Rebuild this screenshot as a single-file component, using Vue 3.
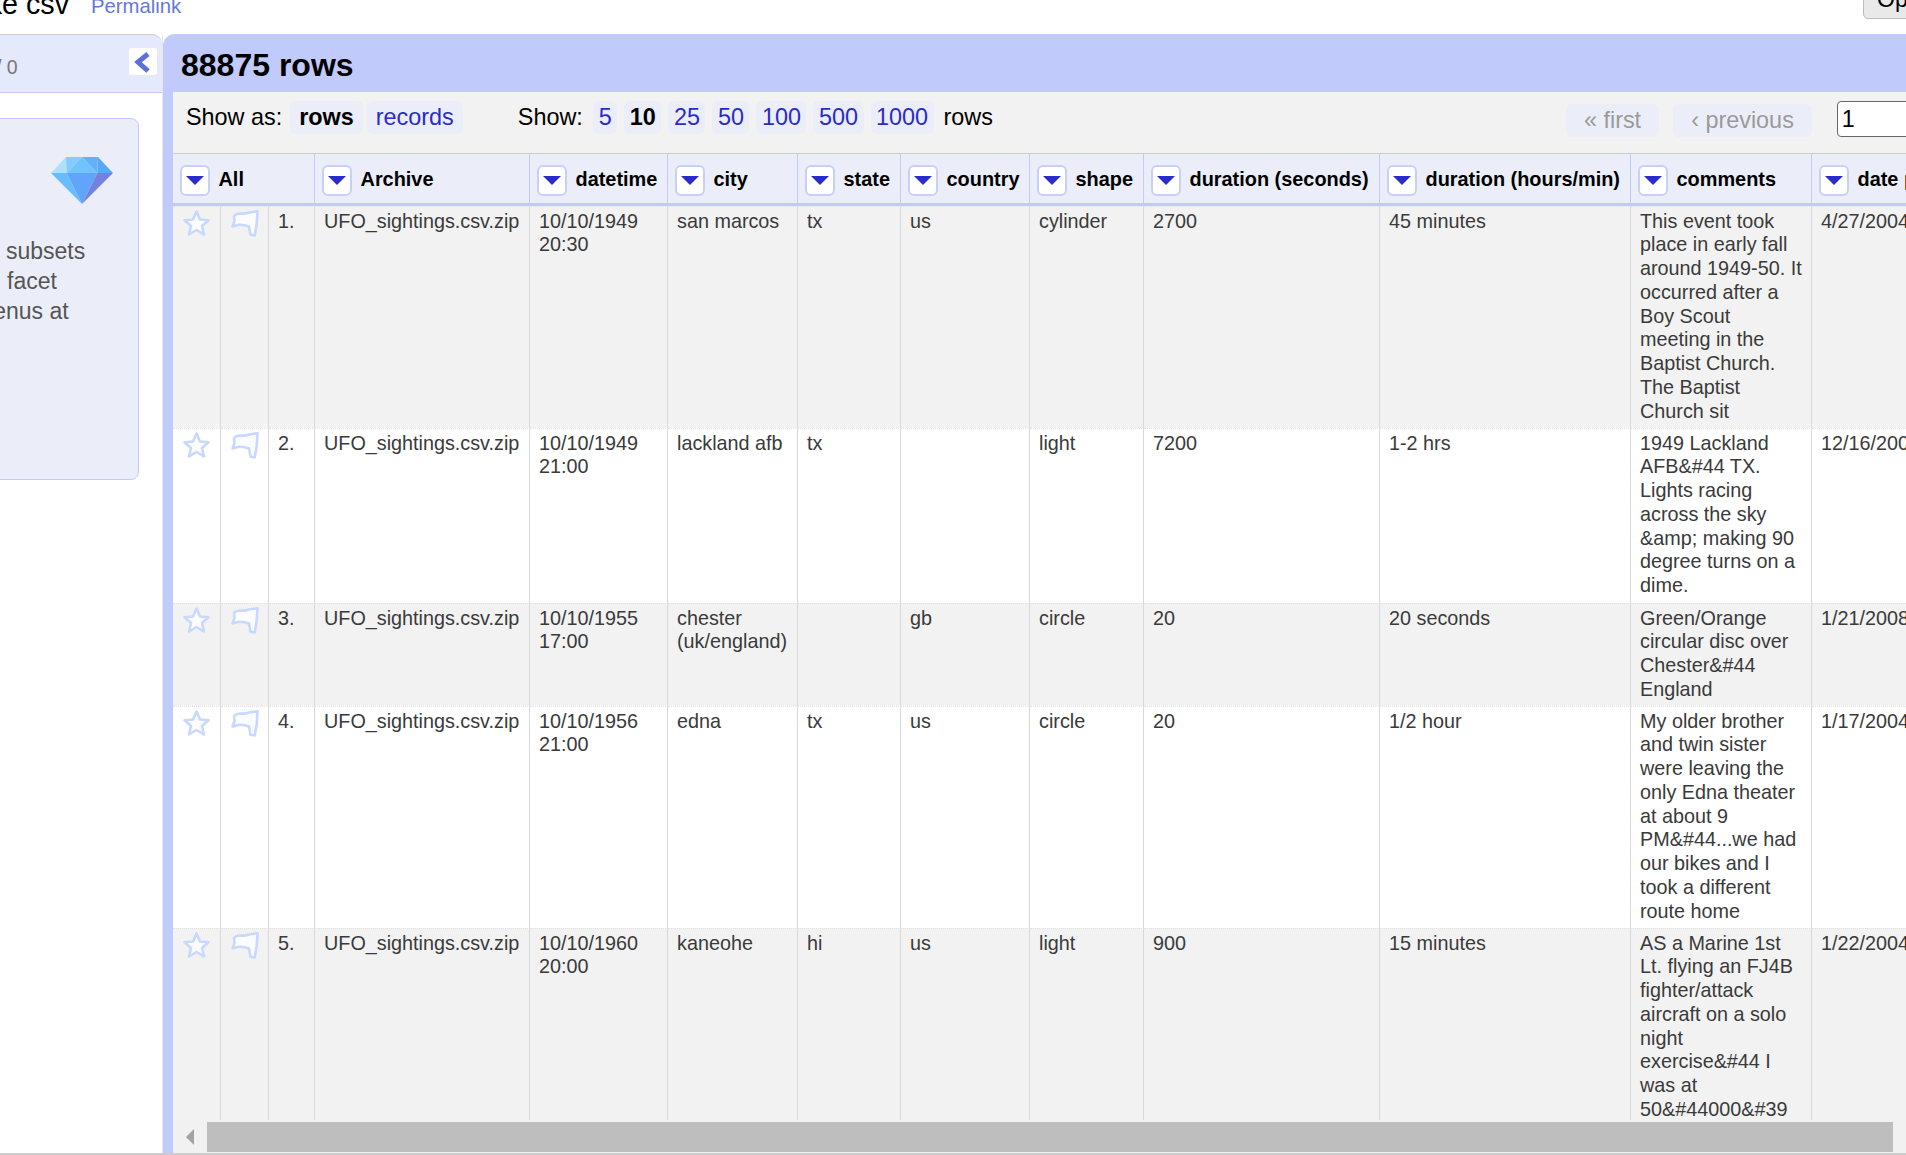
<script setup>
const pageSizes = ['5', '10', '25', '50', '100', '500', '1000']
const columns = ['Archive', 'datetime', 'city', 'state', 'country', 'shape', 'duration (seconds)', 'duration (hours/min)', 'comments', 'date posted']
const colWidths = [48, 48, 46, 215, 138, 130, 103, 129, 114, 236, 251, 181, 160]

const rows = [
  { height: 222, cells: ['UFO_sightings.csv.zip', '10/10/1949 20:30', 'san marcos', 'tx', 'us', 'cylinder', '2700', '45 minutes', 'This event took place in early fall around 1949-50. It occurred after a Boy Scout meeting in the Baptist Church. The Baptist Church sit', '4/27/2004'] },
  { height: 175, cells: ['UFO_sightings.csv.zip', '10/10/1949 21:00', 'lackland afb', 'tx', '', 'light', '7200', '1-2 hrs', '1949 Lackland AFB&#44 TX. Lights racing across the sky &amp; making 90 degree turns on a dime.', '12/16/2005'] },
  { height: 103, cells: ['UFO_sightings.csv.zip', '10/10/1955 17:00', 'chester (uk/england)', '', 'gb', 'circle', '20', '20 seconds', 'Green/Orange circular disc over Chester&#44 England', '1/21/2008'] },
  { height: 222, cells: ['UFO_sightings.csv.zip', '10/10/1956 21:00', 'edna', 'tx', 'us', 'circle', '20', '1/2 hour', 'My older brother and twin sister were leaving the only Edna theater at about 9 PM&#44...we had our bikes and I took a different route home', '1/17/2004'] },
  { height: 240, cells: ['UFO_sightings.csv.zip', '10/10/1960 20:00', 'kaneohe', 'hi', 'us', 'light', '900', '15 minutes', 'AS a Marine 1st Lt. flying an FJ4B fighter/attack aircraft on a solo night exercise&#44 I was at 50&#44000&#39 altitude over', '1/22/2004'] },
]
</script>

<template>
  <div class="page">
    <div class="top_bar">
      <span class="title">ke csv</span>
      <a class="permalink">Permalink</a>
      <button class="open_btn">Open</button>
    </div>

    <div class="workspace">
      <div class="left_panel">
        <div class="left_head">
          <span class="count">/ 0</span>
          <div class="collapse_btn">
            <svg width="28" height="27" viewBox="0 0 28 27">
              <polyline points="19,6 9,14 19,23" fill="none" stroke="#5c70d9" stroke-width="5" />
            </svg>
          </div>
        </div>
        <div class="hint_card">
          <svg class="diamond" width="62" height="47" viewBox="0 0 62 47">
            <polygon points="0,16 15,0 15.7,16" fill="#aee0f9" />
            <polygon points="15,0 31,0 15.7,16" fill="#82cdfb" />
            <polygon points="15.7,16 31,0 46.3,16" fill="#70c3fc" />
            <polygon points="31,0 47,0 46.3,16" fill="#62b1f9" />
            <polygon points="47,0 62,16 46.3,16" fill="#5aa7f7" />
            <polygon points="0,16 15.7,16 31,47" fill="#67bcfd" />
            <polygon points="15.7,16 46.3,16 31,47" fill="#60a5fa" />
            <polygon points="46.3,16 62,16 31,47" fill="#7581e0" />
          </svg>
          <div class="hint_text">
            <p class="line_subsets">subsets</p>
            <p class="line_facet">facet</p>
            <p class="line_menus">menus at</p>
          </div>
        </div>
      </div>

      <div class="main_panel">
        <div class="main_head">88875 rows</div>
        <div class="main_body">
          <div class="toolbar">
            <span class="label">Show as:</span>
            <span class="pill current">rows</span>
            <a class="pill records">records</a>
            <span class="label show_label">Show:</span>
            <template v-for="size in pageSizes" :key="size">
              <span v-if="size === '10'" class="pill small current">{{ size }}</span>
              <a v-else class="pill small">{{ size }}</a>
            </template>
            <span class="label rows_label">rows</span>
            <span class="pager first">« first</span>
            <span class="pager previous">‹ previous</span>
            <input class="page_input" value="1" />
          </div>

          <div class="table_wrap">
            <table class="grid">
              <colgroup>
                <col v-for="(w, i) in colWidths" :key="i" :width="w" />
              </colgroup>
              <thead>
                <tr>
                  <th colspan="3">
                    <div class="th_inner"><span class="drop_btn"><i></i></span>All</div>
                  </th>
                  <th v-for="col in columns" :key="col">
                    <div class="th_inner"><span class="drop_btn"><i></i></span>{{ col }}</div>
                  </th>
                </tr>
              </thead>
              <tbody>
                <tr v-for="(row, r) in rows" :key="r" :class="{ odd: r % 2 === 0 }" :style="{ height: row.height + 'px' }">
                  <td class="icon_cell">
                    <svg class="mark" width="27" height="27" viewBox="0 0 27 27">
                      <polygon points="13.5,1.5 17,9.5 25.5,10.3 19,16 21,24.5 13.5,20 6,24.5 8,16 1.5,10.3 10,9.5" fill="#fbfcff" stroke="#c8d8fe" stroke-width="2.6" stroke-linejoin="round" />
                    </svg>
                  </td>
                  <td class="icon_cell">
                    <svg class="mark" width="28" height="27" viewBox="0 0 28 27">
                      <path d="M3 6 Q5 3.5 9 3.5 Q14 4 18 2.5 L26.5 1.2 L25.7 14 L23.7 25.5 L19.5 24.7 L18 16.5 Q13 14.5 8 14.8 L1.5 16.5 L3.5 11 Z" fill="#fbfcff" stroke="#c8d8fe" stroke-width="2.6" stroke-linejoin="round" />
                    </svg>
                  </td>
                  <td>{{ r + 1 }}.</td>
                  <td v-for="(cell, c) in row.cells" :key="c">{{ cell }}</td>
                </tr>
              </tbody>
            </table>
          </div>

          <div class="scrollbar">
            <span class="scroll_arrow"></span>
            <div class="scroll_thumb"></div>
          </div>
        </div>
      </div>
    </div>
  </div>
</template>

<style>
html, body {
  margin: 0;
  overflow: hidden;
  background: #fff;
}
</style>

<style scoped>
.page {
  display: flex;
  flex-direction: column;
  width: 1906px;
  height: 1155px;
  overflow: hidden;
  font-family: "Liberation Sans", Arial, sans-serif;
  color: #000;
}
.top_bar {
  display: flex;
  align-items: flex-start;
  flex: none;
  height: 34px;
  overflow: hidden;
}
.title {
  flex: none;
  margin: -12.5px 0 0 -12.3px;
  font-size: 28.7px;
}
.permalink {
  flex: none;
  margin: -5px 0 0 22px;
  font-size: 20.3px;
  color: #6478db;
}
.open_btn {
  flex: none;
  margin: -20px -60px 0 auto;
  width: 103px;
  height: 39px;
  padding: 0 0 0 13px;
  text-align: left;
  font-family: inherit;
  font-size: 23px;
  color: #000;
  background: #e9e9e9;
  border: 1px solid #bcbcbc;
  border-radius: 5px;
}
.workspace {
  display: flex;
  flex: 1;
  min-height: 0;
  border-bottom: 2px solid #ccc;
}
.left_panel {
  flex: none;
  width: 163px;
  overflow: hidden;
  border-right: 1px solid #e6e6e6;
  box-sizing: border-box;
}
.left_head {
  display: flex;
  align-items: flex-start;
  justify-content: space-between;
  height: 59px;
  padding: 13px 5px 0 0;
  box-sizing: border-box;
  background: #e5e9fc;
  border-top: 1px solid #ccc;
  border-bottom: 1px solid #c0cbfb;
  border-top-right-radius: 10px;
}
.count {
  margin: 8px 0 0 -4px;
  font-size: 19.5px;
  color: #777;
}
.collapse_btn {
  width: 28px;
  height: 27px;
  background: #fff;
  border-radius: 3px;
}
.collapse_btn svg {
  display: block;
}
.hint_card {
  display: flex;
  flex-direction: column;
  align-items: flex-start;
  width: 160px;
  height: 362px;
  margin: 25px 0 0 -21px;
  box-sizing: border-box;
  background: #ebeef8;
  border: 1px solid #c0cbfb;
  border-radius: 8px;
}
.diamond {
  margin: 38px 0 0 71px;
}
.hint_text {
  margin: 32px 0 0 0;
  font-size: 23px;
  line-height: 30.2px;
  color: #555;
}
.hint_text p {
  margin: 0;
  white-space: nowrap;
}
.line_subsets {
  padding-left: 26px;
}
.line_facet {
  padding-left: 27px;
}
.line_menus {
  margin-left: 0;
  text-indent: -6px;
}
.main_panel {
  display: flex;
  flex-direction: column;
  flex: 1;
  min-width: 0;
  background: #c0cbfb;
  border-top-left-radius: 12px;
}
.main_head {
  flex: none;
  height: 58px;
  padding: 2px 0 0 18px;
  box-sizing: border-box;
  font-size: 32px;
  font-weight: bold;
  line-height: 58px;
}
.main_body {
  display: flex;
  flex-direction: column;
  flex: 1;
  min-height: 0;
  margin-left: 10px;
  background: #f2f2f2;
}
.toolbar {
  display: flex;
  align-items: flex-start;
  flex: none;
  height: 62px;
  padding: 9px 0 0 13px;
  box-sizing: border-box;
  overflow: hidden;
  border-bottom: 1px solid #c0cbfb;
  font-size: 23.4px;
  line-height: 33px;
}
.label {
  flex: none;
}
.pill {
  flex: none;
  height: 33px;
  margin-left: 4px;
  padding: 0 9px;
  background: #ebeef8;
  border-radius: 6px;
  color: #2a2bcb;
}
.pill.current {
  font-weight: bold;
  color: #000;
  margin-left: 8px;
}
.records {
  margin-left: 4px;
}
.show_label {
  margin-left: 55px;
}
.pill.small {
  padding: 0 5.5px;
  margin-left: 7px;
}
.show_label + .pill.small {
  margin-left: 10.5px;
}
.rows_label {
  margin-left: 10px;
}
.pager {
  flex: none;
  height: 33px;
  margin-top: 3px;
  padding: 0 18px;
  background: #ebeef8;
  border-radius: 6px;
  color: #9a9a9a;
}
.first {
  margin-left: 573px;
}
.previous {
  margin-left: 14px;
}
.page_input {
  flex: none;
  width: 120px;
  height: 36px;
  margin-left: 25px;
  padding: 0 0 0 4px;
  box-sizing: border-box;
  border: 1px solid #666;
  border-radius: 4px;
  background: #fff;
  font-family: inherit;
  font-size: 23.4px;
  color: #000;
}
.table_wrap {
  flex: 1;
  min-height: 0;
  overflow: hidden;
}
.grid {
  width: 1735px;
  table-layout: fixed;
  border-collapse: separate;
  border-spacing: 0;
  font-size: 19.8px;
  line-height: 23.75px;
  color: #3a3a3a;
}
.grid th {
  height: 52px;
  padding: 3px 0 0 7px;
  box-sizing: border-box;
  background: #ebeef8;
  border-right: 1px solid #c0cbfb;
  border-bottom: 3px solid #c0cbfb;
  font-size: 19.9px;
  font-weight: bold;
  color: #000;
  text-align: left;
  white-space: nowrap;
  overflow: hidden;
}
.th_inner {
  display: flex;
  align-items: center;
  gap: 8.5px;
}
.drop_btn {
  display: flex;
  align-items: center;
  justify-content: center;
  flex: none;
  width: 30px;
  height: 31px;
  box-sizing: border-box;
  background: #fff;
  border: 2px solid #c6d0fb;
  border-radius: 6px;
}
.drop_btn i {
  display: block;
  width: 0;
  height: 0;
  border-left: 9px solid transparent;
  border-right: 9px solid transparent;
  border-top: 9px solid #2a2bcb;
}
.grid td {
  padding: 2.5px 5px 3px 9px;
  vertical-align: top;
  background: #fff;
  border-right: 1px solid #d9d9d9;
  border-top: 1px dotted #e2e2e2;
  overflow: hidden;
}
.grid tr.odd td {
  background: #f2f2f2;
}
.grid td.icon_cell {
  padding: 3px 0 0 10px;
}
.mark {
  display: block;
  filter: blur(0.4px);
}
.scrollbar {
  display: flex;
  align-items: center;
  flex: none;
  height: 33px;
  padding: 1px 13px 1px 13px;
  box-sizing: border-box;
  background: #f1f1f1;
}
.scroll_arrow {
  flex: none;
  width: 0;
  height: 0;
  border-top: 8px solid transparent;
  border-bottom: 8px solid transparent;
  border-right: 8px solid #a3a3a3;
}
.scroll_thumb {
  flex: 1;
  height: 30px;
  margin-left: 13px;
  background: #bebebe;
}
</style>
